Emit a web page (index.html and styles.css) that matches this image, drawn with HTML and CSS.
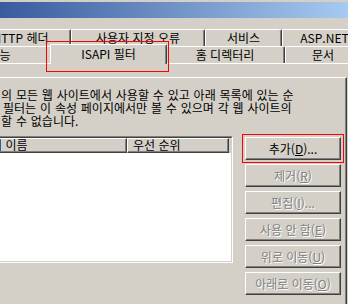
FILE: index.html
```html
<!DOCTYPE html>
<html lang="ko">
<head>
    <meta charset="UTF-8">
    <title>ISAPI 필터</title>
    <link rel="stylesheet" href="styles.css">
</head>
<body>
    <div class="titlebar"></div>

    <div class="tabs">
        <div class="tab-row tab-row-back">
            <div class="tab tab-http">HTTP 헤더</div>
            <div class="tab tab-errors">사용자 지정 오류</div>
            <div class="tab tab-service">서비스</div>
            <div class="tab tab-aspnet">ASP.NET</div>
        </div>
        <div class="tab-row tab-row-front">
            <div class="tab tab-perf">성능</div>
            <div class="tab tab-isapi selected">ISAPI 필터</div>
            <div class="tab tab-home">홈 디렉터리</div>
            <div class="tab tab-docs">문서</div>
        </div>
    </div>

    <div class="panel">
        <div class="frame">
            <div class="desc">
                <div class="desc-line">의 모든 웹 사이트에서 사용할 수 있고 아래 목록에 있는 순</div>
                <div class="desc-line desc-indent">필터는 이 속성 페이지에서만 볼 수 있으며 각 웹 사이트의</div>
                <div class="desc-line">할 수 없습니다.</div>
            </div>

            <div class="list-area">
                <div class="list">
                    <div class="list-inner">
                        <div class="list-header">
                            <div class="col col-name"><span class="col-cut">터 이름</span></div>
                            <div class="col col-priority">우선 순위</div>
                        </div>
                        <div class="list-body"></div>
                    </div>
                </div>

                <div class="buttons">
                    <button class="btn">추가(<u>D</u>)...</button>
                    <button class="btn" disabled>제거(<u>R</u>)</button>
                    <button class="btn" disabled>편집(<u>I</u>)...</button>
                    <button class="btn" disabled>사용 안 함(<u>E</u>)</button>
                    <button class="btn" disabled>위로 이동(<u>U</u>)</button>
                    <button class="btn" disabled>아래로 이동(<u>O</u>)</button>
                </div>
            </div>
        </div>
    </div>

    <div class="mark mark-tab"></div>
    <div class="mark mark-btn"></div>
</body>
</html>
```

FILE: styles.css
```css
body {
    margin: 0;
    width: 348px;
    height: 304px;
    overflow: hidden;
    position: relative;
    background-color: #d4d0c8;
    font-family: "Noto Sans CJK KR", "Noto Sans", sans-serif;
    font-size: 12px;
    color: #000;
}
.titlebar {
    margin-top: 2px;
    height: 16px;
    background: linear-gradient(to right, #3a5b9d, #a6caf0);
}
.tabs {
    margin-top: 11px;
}
.tab-row {
    display: flex;
    height: 17px;
}
.tab-row-back { margin-left: -30px; }
.tab-row-front { margin-left: -53px; }
.tab {
    box-sizing: border-box;
    flex-shrink: 0;
    height: 17px;
    border-top: 1px solid #fff;
    border-left: 1px solid #fff;
    border-right: 1px solid #404040;
    border-radius: 2px 2px 0 0;
    box-shadow: inset -1px 0 #808080;
    background-color: #d4d0c8;
    text-align: center;
    line-height: 15px;
    white-space: nowrap;
}
.tab-http { width: 101px; }
.tab-errors { width: 134px; }
.tab-service { width: 77px; }
.tab-aspnet { width: 85px; }
.tab-perf { width: 105px; }
.tab-isapi { width: 113px; }
.tab-home { width: 120px; }
.tab-docs { width: 76px; }
.tab.selected {
    position: relative;
    z-index: 1;
    height: 20px;
    margin: -2px -2px -1px;
    width: 117px;
    line-height: 18px;
}
.panel {
    border-top: 1px solid #fff;
}
.frame {
    margin-top: 13px;
    margin-right: 1px;
    border-top: 1px solid #fff;
    border-right: 1px solid #404040;
    box-shadow: inset -1px 0 #808080;
    padding-top: 10px;
    height: 216px;
}
.desc-line {
    line-height: 13px;
    white-space: nowrap;
    padding-left: 1px;
    word-spacing: 0.5px;
}
.desc-indent { padding-left: 3px; }
.list-area {
    display: flex;
    align-items: flex-start;
    margin-top: 9px;
}
.list {
    box-sizing: border-box;
    width: 237px;
    margin-left: -4px;
    border: 1px solid;
    border-color: #808080 #fff #fff #808080;
    flex-shrink: 0;
}
.list-inner {
    border: 1px solid;
    border-color: #404040 #d4d0c8 #d4d0c8 #404040;
}
.list-header {
    display: flex;
    height: 15px;
}
.col {
    box-sizing: border-box;
    height: 15px;
    border-top: 1px solid #fff;
    border-left: 1px solid #fff;
    border-right: 1px solid #404040;
    border-bottom: 1px solid #404040;
    box-shadow: inset -1px -1px #808080;
    line-height: 12px;
    white-space: nowrap;
    overflow: hidden;
}
.col-name { width: 129px; }
.col-cut {
    display: inline-block;
    margin-left: -8px;
}
.col-priority {
    width: 102px;
    padding-left: 5px;
}
.list-body {
    height: 108px;
    background-color: #fff;
}
.buttons {
    display: flex;
    flex-direction: column;
    gap: 4px;
    margin-top: 1px;
    margin-left: 12px;
}
.btn {
    box-sizing: border-box;
    width: 96px;
    height: 23px;
    padding: 0;
    border: 1px solid;
    border-color: #fff #404040 #404040 #fff;
    box-shadow: inset -1px -1px #808080;
    background-color: #d4d0c8;
    font-family: inherit;
    font-size: 12px;
    color: #000;
    white-space: nowrap;
}
.btn:disabled {
    color: #808080;
    text-shadow: 1px 1px #fff;
}
.mark {
    position: absolute;
    border: 1px solid #f00;
    z-index: 2;
}
.mark-tab {
    left: 46px;
    top: 41px;
    width: 121px;
    height: 29px;
}
.mark-btn {
    left: 242px;
    top: 134px;
    width: 100px;
    height: 27px;
}
```
